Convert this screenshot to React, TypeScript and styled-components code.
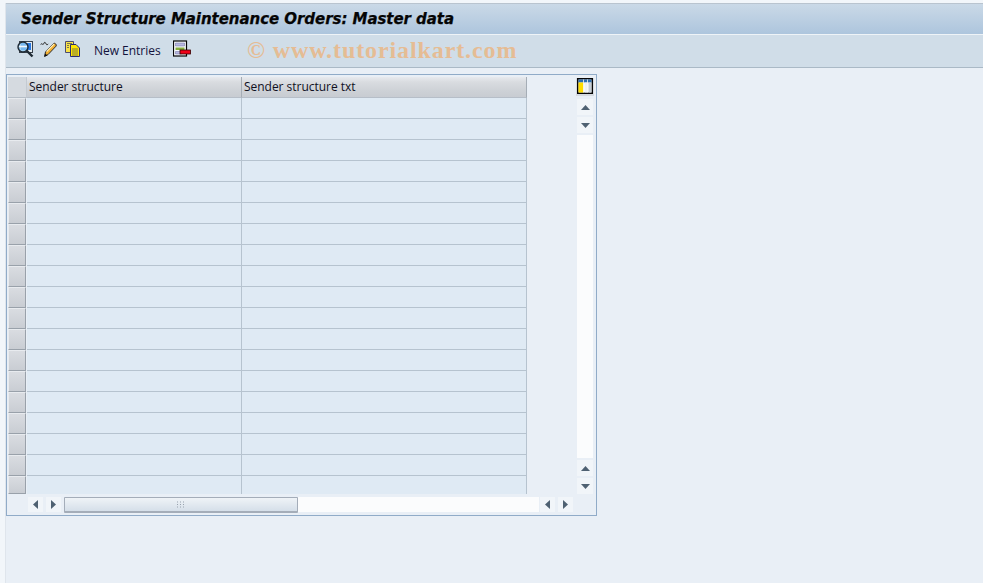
import React from "react";
import styled, { createGlobalStyle } from "styled-components";

const Global = createGlobalStyle`
  html, body { margin: 0; padding: 0; background: #f2f6fa; }
  body { width: 983px; height: 583px; overflow: hidden; font-family: "Liberation Sans", Arial, sans-serif; }
`;
const Page = styled.div`
  width: 983px; height: 583px; padding: 3px 0 0 5px; box-sizing: border-box;
  display: flex; flex-direction: column;
`;
const Content = styled.div`
  display: flex; flex-direction: column; flex: 1; background: #e9eff6; border-left: 1px solid #dfe5ec;
`;
const TitleBar = styled.div`
  height: 32px; box-sizing: border-box; padding-left: 15px;
  display: flex; align-items: center;
  background: linear-gradient(180deg, #cad9e7 0%, #adc5dd 100%);
  border-top: 1px solid #b9c4cf; border-bottom: 1px solid #eef3f7;
`;
const Title = styled.h1`
  margin: 0; font: italic bold 15px "DejaVu Sans", sans-serif; letter-spacing: -0.05px; color: #050505;
  -webkit-text-stroke: .25px #050505;
`;
const Toolbar = styled.div`
  height: 33px; box-sizing: border-box; position: relative; display: flex; align-items: center;
  padding: 0 0 4px 10px; background: #d0dde8; border-bottom: 1px solid #aab9c6;
`;
const ToolIcon = styled.svg`
  width: 18px; height: 18px; margin-right: 6px; flex: none;
`;
const ToolText = styled.span`
  font: 12px "Open Sans", sans-serif; letter-spacing: -.02px; color: #12123c; margin: 0 12px 0 6px; position: relative; top: 1px;
`;
const Watermark = styled.span`
  position: absolute; left: 241px; top: 2px; font: bold 24px "Liberation Serif", serif;
  color: #e5bc94; white-space: nowrap; letter-spacing: .9px;
`;
const TableBox = styled.div`
  width: 591px; height: 442px; box-sizing: border-box; margin: 6px 0 0 0;
  border: 1px solid #90abc8; padding: 2px 0 0 1px; background: #e9eff6;
  display: grid; grid-template-columns: 568px 20px; grid-template-rows: 417px 1fr;
`;
const Grid = styled.div`
  display: flex; flex-direction: column; width: 519px;
`;
const Row = styled.div`
  display: grid; grid-template-columns: 19px 215px 285px; height: 21px; box-sizing: border-box;
  &:last-child { height: 18px; }
`;
const Corner = styled.div`
  background: #d5dae0; border-right: 1px solid #c3cad2; border-bottom: 1px solid #b5bdc6;
`;
const Head = styled.div`
  box-sizing: border-box; padding-left: 2px; font: 12px/20px "Open Sans", sans-serif; letter-spacing: -.03px; color: #10101e;
  background: linear-gradient(180deg, #e8eaee 0%, #d9dce0 25%, #cdd1d6 70%, #c8ccd2 100%);
  border-right: 1px solid #a5adb6; border-bottom: 1px solid #b6bec8;
`;
const Handle = styled.div`
  box-sizing: border-box; margin-right: 1px;
  background: linear-gradient(180deg, #d9dce1, #c9cdd3);
  border: 1px solid #e8ebef; border-right: 1px solid #99a1aa; border-bottom: 1px solid #99a1aa;
`;
const Cell = styled.div`
  background: #dfeaf4; border-right: 1px solid #b6c3cf; border-bottom: 1px solid #b6c3cf;
  ${Row}:last-child & { border-bottom: 0; }
`;
const RightRail = styled.div`
  grid-column: 2; grid-row: 1; display: flex; flex-direction: column; align-items: flex-start; padding-top: 1px;
`;
const ConfigButton = styled.div`
  width: 18px; height: 18px; margin-bottom: 1px; display: flex; align-items: flex-start; justify-content: center; background: #d5dae0;
`;
const ScrollBtn = styled.div`
  width: 16px; height: 16px; margin: 2px 0 0 1px; background: #f1f5f9; display: flex; align-items: center; justify-content: center; flex: none;
`;
const VTrack = styled.div`
  width: 16px; flex: 1; margin: 2px 0 0 1px; background: #fbfcfd;
`;
const BottomRail = styled.div`
  grid-column: 1 / 3; grid-row: 2; display: flex; align-items: flex-start; padding: 3px 0 0 20px;
`;
const HBtn = styled(ScrollBtn)`
  width: 15px; height: 15px; margin: 0 3px 0 0;
`;
const HThumb = styled.div`
  width: 234px; height: 16px; box-sizing: border-box; display: flex; align-items: center; justify-content: center;
  border: 1px solid #a4adb9; border-bottom: 2px solid #a4adb9; border-radius: 1px;
  background: linear-gradient(180deg, #eff3f7, #d5dfe9);
`;
const HTrack = styled.div`
  width: 241px; height: 15px; margin-right: 1px; background: #fbfcfd;
`;

const Arrow = ({ d }: { d: "up" | "down" | "left" | "right" }) => {
  const pts = { up: "1,7 10,7 5.5,2", down: "1,2 10,2 5.5,7", left: "7,1 7,10 2,5.5", right: "2,1 2,10 7,5.5" }[d];
  const hor = d === "left" || d === "right";
  return (
    <svg width={hor ? 9 : 11} height={hor ? 11 : 9} viewBox={hor ? "0 0 9 11" : "0 0 11 9"}>
      <polygon points={pts} fill="#4f6172" />
    </svg>
  );
};

const rows = Array.from({ length: 19 });

export default function App() {
  return (
    <Page>
      <Global />
      <Content>
        <TitleBar><Title>Sender Structure Maintenance Orders: Master data</Title></TitleBar>
        <Toolbar>
          <ToolIcon viewBox="0 0 18 18">
            <rect x="3.5" y="1.5" width="13" height="11" fill="#e4ecf2" stroke="#39424c" />
            <rect x="5" y="3" width="10" height="7" fill="#2a78e0" />
            <circle cx="7" cy="7" r="5" fill="#8cc8f2" fillOpacity=".8" stroke="#1f2a34" strokeWidth="1.4" />
            <path d="M3 6.5h8" stroke="#f4f8fc" strokeWidth="1.6" />
            <path d="M10.5 10.5l6 6" stroke="#1f2a34" strokeWidth="2.4" />
          </ToolIcon>
          <ToolIcon viewBox="0 0 18 18">
            <path d="M.8 4.6c.6-2.4 2 1 2.8-.6s1-2.6 2-1 .8 2.6 2.6 1" fill="none" stroke="#2c2c2c" strokeWidth="1" />
            <path d="M4.5 16.5l1-4.5 8-8.5c1.2-1 3.6 1.2 2.6 2.6l-8 8.4z" fill="#f4b030" stroke="#2c2c2c" strokeWidth="1" />
            <path d="M6.6 11.6l7.4-7.6" stroke="#fdf0c0" strokeWidth="1.1" />
            <path d="M4.5 16.5l.7-3 2.3 2z" fill="#111" />
          </ToolIcon>
          <ToolIcon viewBox="0 0 18 18">
            <path d="M1.5 1.5h8v11h-8z" fill="#f8e24a" stroke="#4c4c70" />
            <path d="M6.5 4.5h5.5l3.5 3.5v8.5h-9z" fill="#ffe600" stroke="#2c2c70" />
            <path d="M8 9h6M8 11h6M8 13h6M8 15h6M3 3.5h5M3 5.5h2M3 7.5h2" stroke="#6a6a50" strokeWidth=".9" />
          </ToolIcon>
          <ToolText>New Entries</ToolText>
          <ToolIcon viewBox="0 0 18 18">
            <rect x=".5" y="1" width="13" height="15" fill="#f8fafc" stroke="#050505" strokeWidth="1.2" />
            <path d="M2.5 3h9v3h-9z" fill="#b8b8e0" stroke="#6a6aa0" strokeWidth=".5" />
            <path d="M2.5 7.5h9v2.5h-9z" fill="#86ae3c" />
            <path d="M2.5 11.5h6v2.5h-6z" fill="#b8b8e0" stroke="#6a6aa0" strokeWidth=".5" />
            <rect x="7" y="10" width="10.5" height="4" fill="#f00018" stroke="#300" strokeWidth=".8" />
          </ToolIcon>
          <Watermark>© www.tutorialkart.com</Watermark>
        </Toolbar>
        <TableBox>
          <Grid>
            <Row><Corner /><Head>Sender structure</Head><Head>Sender structure txt</Head></Row>
            {rows.map((_, i) => <Row key={i}><Handle /><Cell /><Cell /></Row>)}
          </Grid>
          <RightRail>
            <ConfigButton>
              <svg width="16" height="16" viewBox="0 0 16 16">
                <rect x=".75" y=".75" width="14.5" height="14.5" fill="#fff" stroke="#050505" strokeWidth="1.5" />
                <rect x="1.5" y="1.5" width="13" height="3" fill="#2d6fb0" />
                <rect x="1.5" y="4.5" width="5" height="10" fill="#ffdd00" />
                <rect x="7.5" y="4.5" width="3" height="10" fill="#eef1f4" />
                <rect x="11.5" y="4.5" width="3" height="10" fill="#c6ced6" />
                <path d="M6.5 1.5v13M10.5 1.5v13" stroke="#f8f8f8" strokeWidth=".8" />
              </svg>
            </ConfigButton>
            <ScrollBtn><Arrow d="up" /></ScrollBtn>
            <ScrollBtn><Arrow d="down" /></ScrollBtn>
            <VTrack />
            <ScrollBtn><Arrow d="up" /></ScrollBtn>
            <ScrollBtn><Arrow d="down" /></ScrollBtn>
          </RightRail>
          <BottomRail>
            <HBtn><Arrow d="left" /></HBtn>
            <HBtn><Arrow d="right" /></HBtn>
            <HThumb>
              <svg width="10" height="7" viewBox="0 0 10 7">
                <path d="M1 1h1M4 1h1M7 1h1M1 3.5h1M4 3.5h1M7 3.5h1M1 6h1M4 6h1M7 6h1" stroke="#97a1ad" />
              </svg>
            </HThumb>
            <HTrack />
            <HBtn><Arrow d="left" /></HBtn>
            <HBtn><Arrow d="right" /></HBtn>
          </BottomRail>
        </TableBox>
      </Content>
    </Page>
  );
}
